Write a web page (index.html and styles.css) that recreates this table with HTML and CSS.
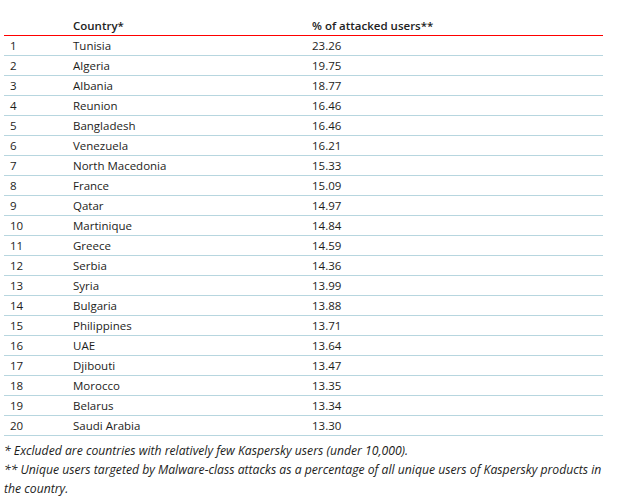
FILE: index.html
```html
<!DOCTYPE html>
<html>
<head>
<meta charset="utf-8">
<link rel="stylesheet" href="styles.css">
</head>
<body>
<div class="wrap">
  <table class="tbl">
    <colgroup><col class="k1"><col class="k2"><col class="k3"></colgroup>
    <thead>
      <tr><th></th><th>Country*</th><th>% of attacked users**</th></tr>
    </thead>
    <tbody>
      <tr><td>1</td><td>Tunisia</td><td>23.26</td></tr>
      <tr><td>2</td><td>Algeria</td><td>19.75</td></tr>
      <tr><td>3</td><td>Albania</td><td>18.77</td></tr>
      <tr><td>4</td><td>Reunion</td><td>16.46</td></tr>
      <tr><td>5</td><td>Bangladesh</td><td>16.46</td></tr>
      <tr><td>6</td><td>Venezuela</td><td>16.21</td></tr>
      <tr><td>7</td><td>North Macedonia</td><td>15.33</td></tr>
      <tr><td>8</td><td>France</td><td>15.09</td></tr>
      <tr><td>9</td><td>Qatar</td><td>14.97</td></tr>
      <tr><td>10</td><td>Martinique</td><td>14.84</td></tr>
      <tr><td>11</td><td>Greece</td><td>14.59</td></tr>
      <tr><td>12</td><td>Serbia</td><td>14.36</td></tr>
      <tr><td>13</td><td>Syria</td><td>13.99</td></tr>
      <tr><td>14</td><td>Bulgaria</td><td>13.88</td></tr>
      <tr><td>15</td><td>Philippines</td><td>13.71</td></tr>
      <tr><td>16</td><td>UAE</td><td>13.64</td></tr>
      <tr><td>17</td><td>Djibouti</td><td>13.47</td></tr>
      <tr><td>18</td><td>Morocco</td><td>13.35</td></tr>
      <tr><td>19</td><td>Belarus</td><td>13.34</td></tr>
      <tr><td>20</td><td>Saudi Arabia</td><td>13.30</td></tr>
    </tbody>
  </table>
  <p class="note">* Excluded are countries with relatively few Kaspersky users (under 10,000).</p>
  <p class="note">** Unique users targeted by Malware-class attacks as a percentage of all unique users of Kaspersky products in the country.</p>
</div>
</body>
</html>
```
FILE: styles.css
```css
html, body { margin: 0; padding: 0; background: #fff; }
body { font-family: "Open Sans", "Liberation Sans", sans-serif; color: #1d1d1b; }
.wrap { width: 599px; padding: 16px 0 0 4px; }
.tbl { width: 599px; border-collapse: collapse; table-layout: fixed; font-size: 11.5px; }
.k1 { width: 69px; }
.k2 { width: 239px; }
.k3 { width: 291px; }
.tbl th { text-align: left; font-weight: 600; height: 19px; padding: 0; border-bottom: 1px solid #ff0000; line-height: 19px; vertical-align: middle; color: #222; }
.tbl td { height: 19px; padding: 0; border-bottom: 1px solid #b7d6df; line-height: 19px; vertical-align: middle; }
.tbl td:first-child, .tbl th:first-child { padding-left: 6px; }
.note { margin: 0; font-size: 12.2px; font-style: italic; line-height: 19px; }
.tbl + .note { margin-top: 5px; }
```
